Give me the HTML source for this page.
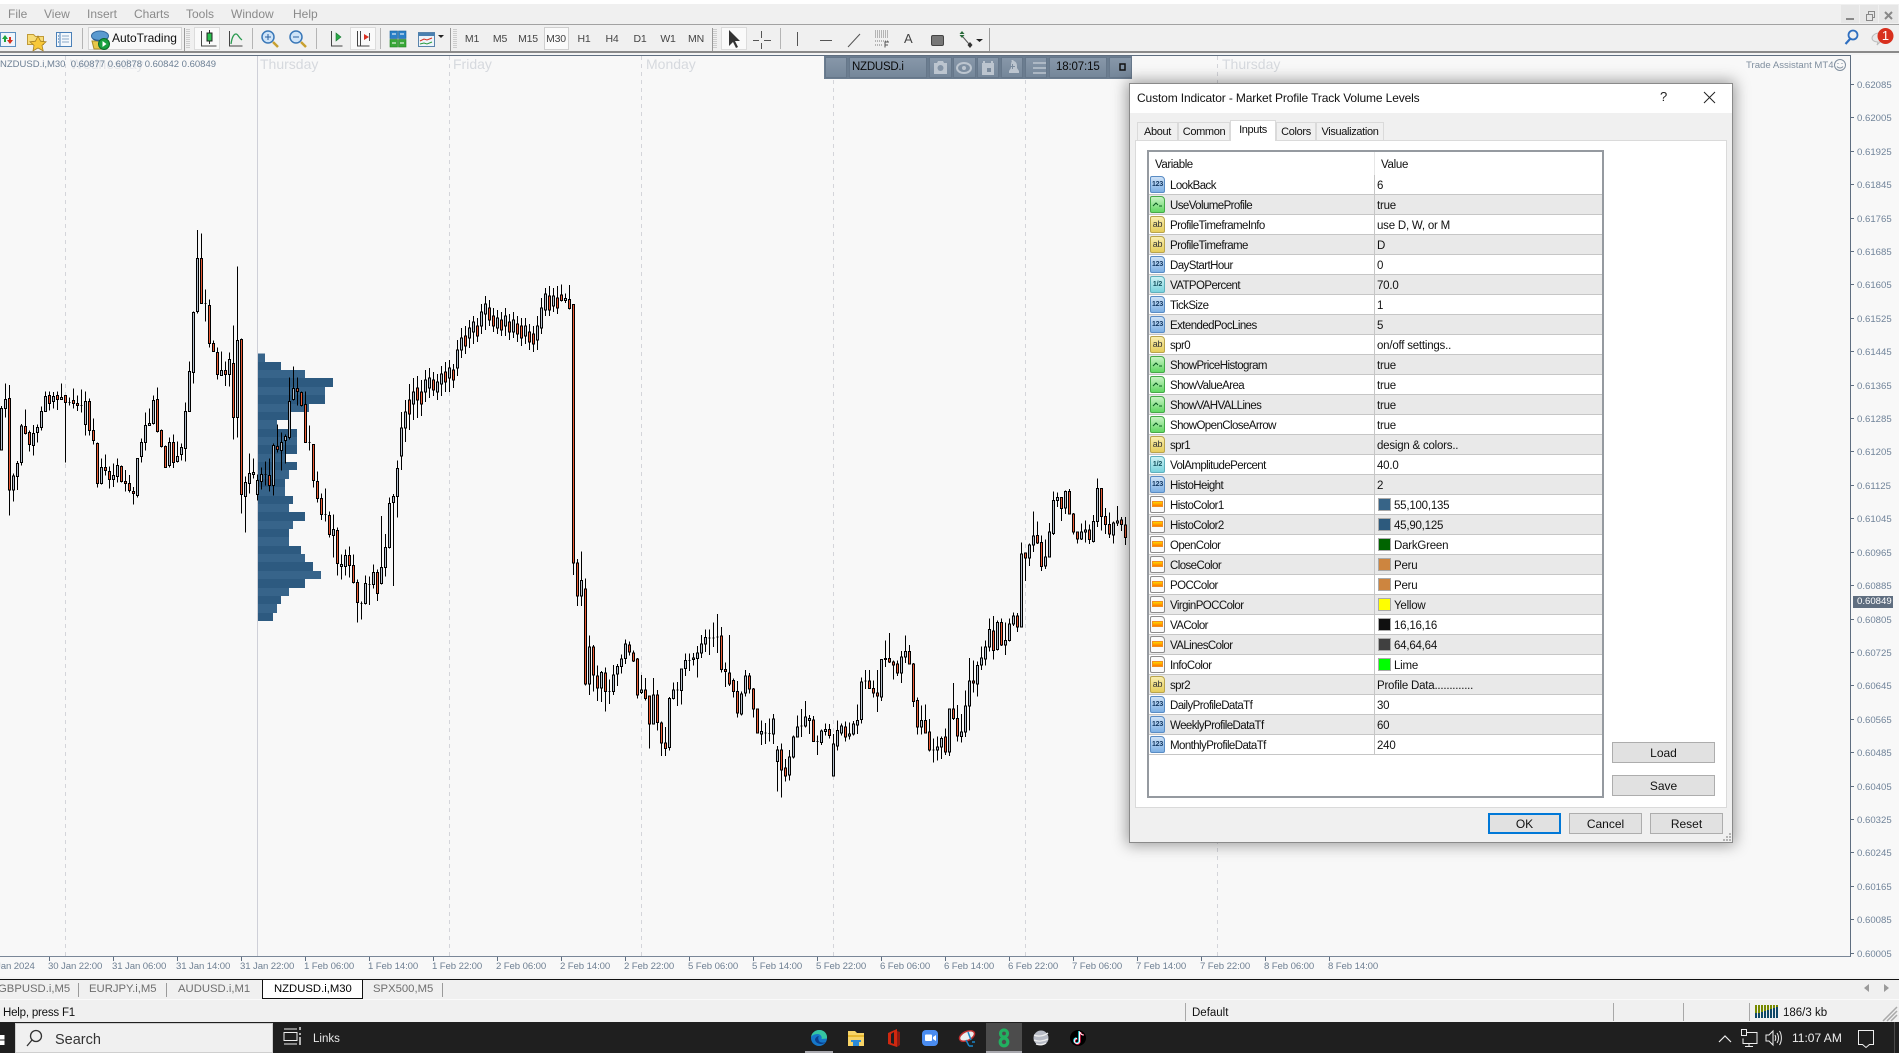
<!DOCTYPE html>
<html lang="en"><head><meta charset="utf-8"><title>MT4</title>
<style>
html,body{margin:0;padding:0;width:1899px;height:1053px;overflow:hidden;background:#f0f0f0;font-family:"Liberation Sans",sans-serif}
.t{position:absolute;white-space:nowrap;line-height:14px;height:14px}
.bx{position:absolute;box-sizing:border-box}
.m{font-size:12px;color:#8a8a8a;top:7px}
.tf{font-size:10.5px;color:#444;top:32px;width:28px;text-align:center;letter-spacing:-.2px}
.p{font-size:9.6px;color:#71849a;left:1857px;margin-top:2px}
.d{font-size:14px;color:#d6d9de;top:57px}
.x{font-size:9.6px;color:#6f8093;top:960px;letter-spacing:-.1px}
.tab{font-size:11.3px;color:#6e6e6e;top:982px}
.pb{position:absolute;top:57px;height:21px;background:linear-gradient(#8797a9,#75879a);box-sizing:border-box;border:1px solid #66778a}
#dlg{position:absolute;left:1129px;top:83px;width:604px;height:760px;box-sizing:border-box;background:#f0f0f0;border:1px solid #8a8a8a;box-shadow:0 0 14px 2px rgba(0,0,0,.38)}
.tb{position:absolute;top:38px;height:18px;box-sizing:border-box;border:1px solid #dadada;border-bottom:none;background:#f0f0f0;font-size:11px;letter-spacing:-.35px;line-height:19px;text-align:center;color:#111}
#list{position:absolute;left:1147px;top:150px;width:457px;height:648px;box-sizing:border-box;border:2px solid #959aa0;background:#fff}
.r{position:relative;height:20px;box-sizing:border-box;border-bottom:1px solid #c6c6c6;line-height:23px;font-size:11.5px;color:#111}
.r:nth-child(even){background:#e9e9e9}
.r b{position:absolute;left:21px;top:0;font-weight:normal;letter-spacing:-.58px;white-space:nowrap}
.r u{position:absolute;left:228px;top:0;text-decoration:none;white-space:nowrap;letter-spacing:-.22px}
.r s{position:absolute;left:229px;top:3px;width:13px;height:13px;box-sizing:border-box;border:1px solid #aaa}
.r s+u{left:245px}
.r::after{content:"";position:absolute;left:225px;top:0;bottom:-1px;width:1px;background:#c6c6c6}
.ic{position:absolute;left:1px;top:1px;width:15px;height:17px;box-sizing:border-box;border:1px solid;border-radius:2px 4px 2px 2px;font:bold 7px/15px "Liberation Sans",sans-serif;text-align:center;letter-spacing:-.2px}
.n{background:linear-gradient(#cfe2f7,#7eb0e4);border-color:#5a8cc4;color:#12365f}
.a{background:linear-gradient(#f9eeb0,#e6cd5c);border-color:#b9a44c;color:#333;font-size:9px;font-weight:normal}
.h{background:linear-gradient(#cdf2f4,#7ad2dd);border-color:#5fb0bd;color:#14505c}
.g{background:linear-gradient(#c8f2c4,#62d864);border-color:#46a948}
.c{background:#fafafa;border-color:#8b8b8b}
.c::before{content:"";position:absolute;left:1px;right:1px;top:4px;height:6px;background:linear-gradient(#ffd400,#ff7a00);border:1px solid #f09020;box-sizing:border-box}
.ic svg{position:absolute;left:0;top:0}
.btn{position:absolute;box-sizing:border-box;background:#e1e1e1;border:1px solid #adadad;font-size:12px;text-align:center;line-height:21px;color:#111}
</style></head><body>

<!-- top chrome -->
<div class="bx" style="left:0;top:0;width:1899px;height:4px;background:#fff"></div>
<div class="bx" style="left:0;top:24px;width:1899px;height:1px;background:#a2a2a2"></div>
<div class="bx" style="left:0;top:51px;width:1899px;height:2px;background:#8a8a8a"></div>
<div class="bx" style="left:0;top:53px;width:1899px;height:2px;background:#f4f4f4"></div>
<div class="t m" style="left:8px">File</div><div class="t m" style="left:44px">View</div><div class="t m" style="left:87px">Insert</div><div class="t m" style="left:134px">Charts</div><div class="t m" style="left:186px">Tools</div><div class="t m" style="left:231px">Window</div><div class="t m" style="left:293px">Help</div>
<div class="bx" style="left:1841px;top:5px;width:18px;height:18px;background:#e6e6e6"></div>
<div class="bx" style="left:1860px;top:5px;width:18px;height:18px;background:#e6e6e6"></div>
<div class="bx" style="left:1879px;top:5px;width:19px;height:18px;background:#e6e6e6"></div>
<div class="bx" style="left:88px;top:27px;width:94px;height:23px;background:#f8f8f8;border:1px solid #d4d4d4"></div>
<div class="bx" style="left:194px;top:27px;width:26px;height:23px;background:#fafafa;border:1px solid #dcdcdc"></div>
<div class="bx" style="left:350px;top:27px;width:26px;height:23px;background:#fafafa;border:1px solid #dcdcdc"></div>
<div class="bx" style="left:544px;top:27px;width:25px;height:23px;background:#fafafa;border:1px solid #cfcfcf"></div>
<div class="bx" style="left:721px;top:27px;width:26px;height:23px;background:#fafafa;border:1px solid #dcdcdc"></div>
<div class="t" style="left:112px;top:31px;font-size:12px;color:#111">AutoTrading</div>
<div class="t tf" style="left:458px">M1</div><div class="t tf" style="left:486px">M5</div><div class="t tf" style="left:514px">M15</div><div class="t tf" style="left:542px">M30</div><div class="t tf" style="left:570px">H1</div><div class="t tf" style="left:598px">H4</div><div class="t tf" style="left:626px">D1</div><div class="t tf" style="left:654px">W1</div><div class="t tf" style="left:682px">MN</div>
<div class="t" style="left:904px;top:32px;font-size:13px;color:#444">A</div>

<!-- toolbar icons -->
<svg style="position:absolute;left:0;top:0" width="1899" height="56" viewBox="0 0 1899 56" fill="none">
<rect x="0.5" y="32.5" width="15" height="14" fill="#eef5fc" stroke="#5a8fc0"/><path d="M5 35l-3 4h2v3h2v-3h2z" fill="#1aa33a"/><path d="M10 44l3-4h-2v-3H9v3H7z" fill="#d8301c"/>
<path d="M27.5 34.5h6l2 2h8v8h-16z" fill="#f8dd78" stroke="#c09a38"/><path d="M38 36l2.6 5.2 5.4.6-4 3.6 1.2 5.4-5.2-2.8-5 2.8 1-5.4-4-3.6 5.4-.6z" fill="#f8c838" stroke="#a88020" stroke-width=".8"/>
<rect x="56.5" y="32.5" width="15" height="14" fill="#f4f8fc" stroke="#4a80b8"/><path d="M60 33v13" stroke="#4a80b8"/><path d="M62 36h7M62 39h7M62 42h7" stroke="#8aa8c8"/><path d="M58 36h1M58 39h1M58 42h1" stroke="#2060a0"/>
<path d="M82.5 28v21M252.5 28v21M316.5 28v21M380.5 28v21M780.5 28v21" stroke="#b4b4b4"/>
<path d="M92 41h15l-2 8H94z" fill="#e8c848" stroke="#a88c28"/><ellipse cx="100" cy="36" rx="8.5" ry="5" fill="#5a9ad0" stroke="#34689c"/><path d="M93 39c4 2 10 2 15-1" stroke="#2a5a8c"/><circle cx="104" cy="44" r="5.5" fill="#18a040" stroke="#0c6a28"/><path d="M102.5 41v6l4-3z" fill="#fff"/>
<path d="M187 29v20M189 29v20M714 29v20M716 29v20M454 29v20M456 29v20" stroke="#aaa" stroke-dasharray="1 1"/>
<path d="M450.5 28v23M184.5 28v23M712.5 28v23M989.5 28v23" stroke="#9a9a9a"/>
<path d="M201.500 31v15h15" stroke="#444"/><path d="M209.500 30v14" stroke="#333"/><rect x="207" y="33" width="5" height="8" fill="#2cc050" stroke="#222"/>
<path d="M229.500 31v15h13" stroke="#444"/><path d="M231 44c1-7 3-10 5-10s3 4 6 6" stroke="#2a9a50" stroke-width="1.300"/>
<circle cx="268" cy="37" r="6" fill="#cfe4f8" stroke="#3a78b8" stroke-width="1.500"/><path d="M265 37h6M268 34v6" stroke="#2a60a0"/><path d="M273 42l5 5" stroke="#c8a030" stroke-width="2.500"/>
<circle cx="296" cy="37" r="6" fill="#cfe4f8" stroke="#3a78b8" stroke-width="1.500"/><path d="M293 37h6" stroke="#2a60a0"/><path d="M301 42l5 5" stroke="#c8a030" stroke-width="2.500"/>
<path d="M331.500 31v15h11" stroke="#444"/><path d="M336 33v8l5-4z" fill="#2aa848" stroke="#187830" stroke-width=".6"/>
<path d="M357.500 31v15h12M360.500 31v15" stroke="#444"/><path d="M369 37l-5-3v6z" fill="#d83020"/><path d="M369.500 33v8" stroke="#555"/>
<rect x="390" y="31" width="7.500" height="7.500" fill="#2a80c8" stroke="#186098" stroke-width=".6"/><rect x="398.500" y="31" width="7.500" height="7.500" fill="#2a80c8" stroke="#186098" stroke-width=".6"/><rect x="390" y="39.500" width="7.500" height="7.500" fill="#38a838" stroke="#208020" stroke-width=".6"/><rect x="398.500" y="39.500" width="7.500" height="7.500" fill="#38a838" stroke="#208020" stroke-width=".6"/><path d="M392 34h4M400 34h4M392 43h4M400 43h4" stroke="#fff"/>
<rect x="418.500" y="32.500" width="16" height="14" fill="#eef4fa" stroke="#5a84ac"/><path d="M418 33h17v3h-17z" fill="#4a80b0"/><path d="M420 41l4-2 3 1 5-2" stroke="#d83020"/><path d="M420 44l4-1 3 1 5-2" stroke="#2a9a40"/><path d="M438 35h6l-3 3z" fill="#222"/>
<path d="M729 30v16l4-4 3 6 2-1-3-6h5z" fill="#333"/><path d="M761.500 31v18M753 40.500h18" stroke="#555"/><path d="M759 40.500h5M761.500 38v5" stroke="#f0f0f0"/>
<path d="M797.500 32v14M820 40.500h12M848 47l12-13" stroke="#555"/>
<path d="M875 31h13M875 33h13M875 35h13M875 37h13M875 41h13M875 45h7" stroke="#777" stroke-dasharray="1 1"/><path d="M885 47.500V42h4M885 45h3" stroke="#555"/>
<rect x="931.500" y="35.500" width="12" height="10" rx="1.500" fill="#777" stroke="#444"/>
<path d="M962 31l2.500 3h-5zM962 38l2.500-3h-5z" fill="#2a6a3a"/><path d="M963 37l6 7" stroke="#555"/><path d="M970 42l2.500 3-2.500 3-2.500-3z" fill="#333"/><path d="M976 39h7l-3.500 3z" fill="#222"/>
<circle cx="1853" cy="35" r="4.500" stroke="#2f6fc0" stroke-width="1.800"/><path d="M1850 39l-4.500 5" stroke="#2f6fc0" stroke-width="2.200"/>
<path d="M1878 42c-4 0-6-2-6-4s3-5 7-5 7 2 7 5-3 4-6 4l-3 3z" fill="#e8e8e8" stroke="#bbb"/>
<circle cx="1885.500" cy="36" r="8" fill="#d8301e"/>
<path d="M1846 19h8" stroke="#888" stroke-width="2"/><rect x="1866.500" y="14.500" width="6" height="6" stroke="#888"/><path d="M1868.500 14v-2.500h6v6h-2" stroke="#888"/><path d="M1885 12l7 7M1892 12l-7 7" stroke="#888" stroke-width="2"/>
</svg>
<div class="t" style="left:1881px;top:29px;font-size:13px;color:#fff;width:9px;text-align:center">1</div>

<!-- chart area -->
<div class="bx" style="left:0;top:55px;width:1899px;height:923px;background:#f8f8f8"></div>
<div class="bx" style="left:0;top:55px;width:1851px;height:902px;border-top:1px solid #5f6e80;border-right:1px solid #5f6e80;border-bottom:1px solid #7a8798"></div>
<div class="t d" style="left:70px;color:#e2e4e8">Wednesday</div><div class="t d" style="left:260px">Thursday</div><div class="t d" style="left:453px">Friday</div><div class="t d" style="left:646px">Monday</div><div class="t d" style="left:1222px">Thursday</div>

<svg style="position:absolute;left:0;top:0" width="1899" height="1053" viewBox="0 0 1899 1053" fill="none" shape-rendering="crispEdges">
<path d="M65.500 56V956M449.500 56V956M641.500 56V956M833.500 56V956M1025.500 56V956M1217.500 56V956" stroke="#d4d5da" stroke-dasharray="4 4"/>
<path d="M257.500 56V956" stroke="#cfd0d8"/>
<g transform="translate(0 220) scale(1 .33333)">
<g fill="#37648a"><rect x="258" y="400" width="7" height="26"/><rect x="258" y="450" width="47" height="24"/><rect x="258" y="501" width="67" height="24"/><rect x="258" y="552" width="51" height="24"/><rect x="258" y="600" width="19" height="27"/><rect x="258" y="651" width="39" height="24"/><rect x="258" y="702" width="27" height="24"/><rect x="258" y="750" width="31" height="27"/><rect x="258" y="801" width="27" height="27"/><rect x="258" y="852" width="31" height="24"/><rect x="258" y="903" width="35" height="24"/><rect x="258" y="951" width="31" height="27"/><rect x="258" y="1002" width="47" height="24"/><rect x="258" y="1053" width="63" height="24"/><rect x="258" y="1104" width="31" height="24"/><rect x="258" y="1152" width="19" height="27"/></g>
<g fill="#2d5a80"><rect x="258" y="426" width="23" height="24"/><rect x="258" y="474" width="75" height="27"/><rect x="258" y="525" width="67" height="27"/><rect x="258" y="576" width="31" height="24"/><rect x="258" y="627" width="39" height="24"/><rect x="258" y="675" width="39" height="27"/><rect x="258" y="726" width="39" height="24"/><rect x="258" y="777" width="27" height="24"/><rect x="258" y="828" width="35" height="24"/><rect x="258" y="876" width="47" height="27"/><rect x="258" y="927" width="31" height="24"/><rect x="258" y="978" width="43" height="24"/><rect x="258" y="1026" width="55" height="27"/><rect x="258" y="1077" width="47" height="27"/><rect x="258" y="1128" width="23" height="24"/><rect x="258" y="1179" width="15" height="24"/></g>
<path vector-effect="non-scaling-stroke" stroke="#000" d="M1.500 558V690M5.500 490V592M9.500 495V887M13.500 760V845M17.500 723V810M21.500 612V737M25.500 568V643M29.500 632V695M33.500 615V707M37.500 613V668M41.500 560V632M45.500 514V575M49.500 514V572M53.500 516V566M57.500 514V570M61.500 490V540M65.500 526V728M69.500 533V556M73.500 505V565M77.500 526V573M81.500 508V577M85.500 514V647M89.500 535V647M93.500 595V674M97.500 668V803M101.500 715V793M105.500 703V767M109.500 739V806M113.500 731V801M117.500 715V787M121.500 736V787M125.500 750V814M129.500 765V817M133.500 801V854M137.500 715V832M141.500 655V728M145.500 577V691M149.500 565V618M153.500 526V613M157.500 502V637M161.500 628V682M165.500 676V744M169.500 652V742M173.500 643V744M177.500 664V727M181.500 670V721M185.500 547V724M189.500 424V574M193.500 274V490M197.500 30V280M201.500 40V250M205.500 208V304M209.500 238V382M213.500 362V396M217.500 382V478M221.500 394V466M225.500 424V498M229.500 397V500M233.500 316V658M237.500 139V653M241.500 355V881M245.500 769V937M249.500 700V820M253.500 715V775M257.500 763V841M261.500 742V808M265.500 724V796M269.500 715V814M273.500 670V826M277.500 613V697M281.500 637V752M285.500 643V730M289.500 472V658M293.500 439V541M297.500 472V556M301.500 514V560M305.500 514V667M309.500 616V691M313.500 673V802M317.500 754V848M321.500 820V900M325.500 805V905M329.500 874V952M333.500 883V1013M337.500 922V1067M341.500 1003V1079M345.500 988V1067M349.500 979V1073M353.500 1003V1090M357.500 1078V1208M361.500 1144V1198M365.500 1066V1153M369.500 1069V1155M373.500 1033V1105M377.500 1048V1143M381.500 888V1093M385.500 942V1070M389.500 832V985M393.500 822V1098M397.500 721V892M68.500 547h2M80.500 556h2M204.500 250h2M264.500 763h2M308.500 667h2M324.500 883h2M360.500 1150h2M368.500 1093h2"/>
<path vector-effect="non-scaling-stroke" stroke="#000" fill="#b4bfcc" d="M.5 565h2V690h-2zM4.500 538h2V565h-2zM12.500 768h2V810h-2zM16.500 730h2V770h-2zM20.500 618h2V727h-2zM32.500 640h2V676h-2zM36.500 622h2V637h-2zM40.500 574h2V622h-2zM44.500 529h2V574h-2zM52.500 529h2V544h-2zM60.500 532h2V538h-2zM84.500 544h2V613h-2zM100.500 742h2V790h-2zM112.500 766h2V778h-2zM116.500 736h2V769h-2zM136.500 715h2V826h-2zM140.500 667h2V709h-2zM144.500 616h2V667h-2zM148.500 610h2V616h-2zM152.500 541h2V610h-2zM168.500 667h2V736h-2zM176.500 709h2V724h-2zM180.500 682h2V703h-2zM184.500 574h2V685h-2zM188.500 454h2V574h-2zM192.500 277h2V457h-2zM196.500 115h2V274h-2zM220.500 451h2V466h-2zM228.500 418h2V463h-2zM236.500 361h2V592h-2zM244.500 787h2V829h-2zM248.500 760h2V790h-2zM252.500 757h2V763h-2zM256.500 781h2V823h-2zM260.500 763h2V784h-2zM272.500 676h2V796h-2zM280.500 667h2V691h-2zM284.500 649h2V661h-2zM288.500 544h2V652h-2zM292.500 505h2V538h-2zM332.500 928h2V946h-2zM340.500 1033h2V1039h-2zM344.500 1006h2V1039h-2zM364.500 1090h2V1150h-2zM372.500 1057h2V1093h-2zM380.500 1042h2V1090h-2zM384.500 982h2V1042h-2zM388.500 850h2V982h-2zM392.500 829h2V847h-2zM396.500 745h2V829h-2z"/>
<path vector-effect="non-scaling-stroke" stroke="#000" fill="#ea5a34" d="M8.500 535h2V810h-2zM24.500 619h2V641h-2zM28.500 637h2V673h-2zM48.500 526h2V550h-2zM56.500 526h2V538h-2zM64.500 526h2V547h-2zM72.500 541h2V550h-2zM76.500 550h2V556h-2zM88.500 544h2V631h-2zM92.500 631h2V661h-2zM96.500 670h2V790h-2zM104.500 742h2V752h-2zM108.500 754h2V778h-2zM120.500 739h2V784h-2zM124.500 784h2V790h-2zM128.500 790h2V811h-2zM132.500 814h2V820h-2zM156.500 538h2V634h-2zM160.500 631h2V679h-2zM164.500 679h2V742h-2zM172.500 667h2V727h-2zM200.500 115h2V250h-2zM208.500 256h2V370h-2zM212.500 370h2V394h-2zM216.500 397h2V463h-2zM224.500 451h2V463h-2zM232.500 430h2V592h-2zM240.500 358h2V823h-2zM268.500 766h2V796h-2zM276.500 679h2V688h-2zM296.500 505h2V514h-2zM300.500 517h2V556h-2zM304.500 553h2V667h-2zM312.500 673h2V781h-2zM316.500 784h2V835h-2zM320.500 835h2V883h-2zM328.500 886h2V943h-2zM336.500 931h2V1030h-2zM348.500 1006h2V1036h-2zM352.500 1036h2V1087h-2zM356.500 1087h2V1147h-2zM376.500 1057h2V1120h-2z"/>
</g>
<!-- mid section, real coordinates -->
<path stroke="#000" d="M401.500 412V470M405.500 400V442M409.500 384V430M413.500 378V420M417.500 376V418M421.500 380V416M425.500 370V402M429.500 368V398M433.500 372V396M437.500 374V400M441.500 366V396M445.500 362V392M449.500 360V392M453.500 364V388M457.500 340V376M461.500 328V358M465.500 326V354M469.500 320V348M473.500 316V344M477.500 318V342M481.500 304V334M485.500 296V330M489.500 300V326M493.500 308V332M497.500 310V334M501.500 312V336M505.500 308V336M509.500 314V340M513.500 312V338M517.500 316V342M521.500 318V346M525.500 318V344M529.500 324V350M533.500 326V352M537.500 316V350M541.500 298V334M545.500 288V316M549.500 286V316M553.500 288V312M557.500 286V314"/>
<path stroke="#000" fill="#b4bfcc" d="M400.500 428h2V456h-2zM404.500 412h2V428h-2zM412.500 392h2V404h-2zM424.500 380h2V392h-2zM428.500 378h2V388h-2zM436.500 382h2V392h-2zM440.500 374h2V384h-2zM448.500 368h2V378h-2zM456.500 350h2V368h-2zM460.500 338h2V350h-2zM468.500 328h2V338h-2zM472.500 322h2V332h-2zM480.500 312h2V326h-2zM484.500 304h2V314h-2zM496.500 318h2V328h-2zM504.500 316h2V326h-2zM512.500 320h2V332h-2zM524.500 326h2V336h-2zM536.500 326h2V340h-2zM540.500 308h2V328h-2zM544.500 294h2V310h-2zM552.500 296h2V306h-2z"/>
<path stroke="#000" fill="#ea5a34" d="M408.500 400h2V414h-2zM416.500 388h2V400h-2zM420.500 392h2V404h-2zM432.500 380h2V390h-2zM444.500 372h2V382h-2zM452.500 370h2V380h-2zM464.500 336h2V346h-2zM476.500 326h2V336h-2zM488.500 308h2V320h-2zM492.500 316h2V326h-2zM500.500 320h2V330h-2zM508.500 322h2V332h-2zM516.500 324h2V334h-2zM520.500 326h2V338h-2zM528.500 332h2V342h-2zM532.500 334h2V344h-2zM548.500 296h2V310h-2zM556.500 298h2V308h-2z"/>
<g transform="translate(0 270) scale(1 .34483)">
<path vector-effect="non-scaling-stroke" stroke="#000" d="M561.500 42V92M565.500 68V95M569.500 44V115M573.500 100V885M577.500 838V975M581.500 817V975M585.500 895V1205M589.500 1060V1233M593.500 1087V1222M597.500 1147V1250M601.500 1163V1253M605.500 1153V1280M609.500 1188V1258M613.500 1145V1233M617.500 1142V1207M621.500 1115V1170M625.500 1072V1143M629.500 1078V1118M633.500 1104V1137M637.500 1125V1243M641.500 1175V1230M645.500 1183V1248M649.500 1235V1388M653.500 1183V1317M657.500 1218V1335M661.500 1310V1410M665.500 1325V1410M669.500 1238V1393M673.500 1196V1245M677.500 1195V1265M681.500 1155V1260M685.500 1112V1178M689.500 1112V1163M693.500 1110V1147M697.500 1090V1182M701.500 1058V1125M705.500 1042V1108M709.500 1042V1117M713.500 1022V1093M717.500 998V1110M721.500 1035V1167M725.500 1138V1210M729.500 1058V1207M733.500 1185V1240M737.500 1192V1298M741.500 1222V1292M745.500 1160V1237M749.500 1168V1228M753.500 1212V1298M757.500 1273V1342M761.500 1307V1378M765.500 1313V1375M769.500 1300V1368M773.500 1287V1375M777.500 1380V1513M781.500 1373V1530M785.500 1418V1483M789.500 1392V1480M793.500 1350V1417M797.500 1292V1355M801.500 1273V1355M805.500 1250V1327M809.500 1290V1345M813.500 1293V1367M817.500 1350V1407M821.500 1332V1378M825.500 1315V1350M829.500 1316V1358M833.500 1345V1468M837.500 1307V1393M841.500 1315V1350M845.500 1310V1367M849.500 1312V1362M853.500 1308V1350M857.500 1260V1345M861.500 1182V1315M865.500 1160V1215M869.500 1160V1215M873.500 1190V1240M877.500 1160V1282M881.500 1128V1250M885.500 1075V1152M889.500 1053V1140M893.500 1132V1187M897.500 1132V1178M901.500 1105V1198M905.500 1060V1140M909.500 1087V1143M913.500 1140V1268M917.500 1240V1347M921.500 1263V1347M925.500 1260V1343M929.500 1302V1397M933.500 1358V1428M937.500 1353V1422M941.500 1353V1418M945.500 1330V1407M949.500 1273V1410M953.500 1197V1305M957.500 1262V1367M961.500 1287V1370M965.500 1220V1355M969.500 1125V1335M973.500 1133V1225M977.500 1135V1237M981.500 1092V1160M985.500 1075V1147M989.500 1010V1107M993.500 1003V1130M997.500 1017V1103M1001.500 1010V1090M1005.500 1022V1117M1009.500 1010V1077M1013.500 993V1032M1017.500 995V1050M1021.500 790V1035M1025.500 820V902M1029.500 793V858M1033.500 700V818M1037.500 730V795M1041.500 770V873M1045.500 782V867M1049.500 733V832M1053.500 643V768M1057.500 645V688M1061.500 658V728M1065.500 640V708M1069.500 635V707M1073.500 705V767M1077.500 758V793M1081.500 735V783M1085.500 727V790M1089.500 738V795M1093.500 710V790M1097.500 605V745M1101.500 634V755M1105.500 690V765M1109.500 703V777M1113.500 730V793M1117.500 685V742M1121.500 717V757M1125.500 717V798M608.500 1222h2M676.500 1218h2M688.500 1132h2M708.500 1067h2M712.500 1067h2M716.500 1065h2M764.500 1342h2M768.500 1344h2M800.500 1323h2M816.500 1367h2M864.500 1192h2M932.500 1392h2"/>
<path vector-effect="non-scaling-stroke" stroke="#000" fill="#b4bfcc" d="M564.500 82h2V88h-2zM580.500 900h2V945h-2zM588.500 1093h2V1200h-2zM600.500 1167h2V1212h-2zM612.500 1175h2V1222h-2zM616.500 1150h2V1172h-2zM620.500 1128h2V1150h-2zM624.500 1084h2V1127h-2zM640.500 1218h2V1225h-2zM652.500 1232h2V1317h-2zM668.500 1242h2V1385h-2zM672.500 1218h2V1242h-2zM680.500 1157h2V1220h-2zM684.500 1132h2V1155h-2zM692.500 1125h2V1130h-2zM696.500 1110h2V1126h-2zM700.500 1084h2V1110h-2zM704.500 1066h2V1085h-2zM740.500 1230h2V1288h-2zM744.500 1178h2V1227h-2zM760.500 1338h2V1345h-2zM772.500 1302h2V1345h-2zM776.500 1392h2V1425h-2zM788.500 1412h2V1465h-2zM792.500 1354h2V1413h-2zM796.500 1325h2V1354h-2zM804.500 1296h2V1323h-2zM808.500 1300h2V1306h-2zM820.500 1337h2V1370h-2zM824.500 1332h2V1338h-2zM832.500 1375h2V1468h-2zM836.500 1335h2V1380h-2zM840.500 1322h2V1342h-2zM848.500 1345h2V1352h-2zM852.500 1317h2V1345h-2zM856.500 1306h2V1320h-2zM860.500 1195h2V1304h-2zM880.500 1130h2V1238h-2zM884.500 1127h2V1130h-2zM900.500 1122h2V1168h-2zM904.500 1107h2V1122h-2zM920.500 1307h2V1325h-2zM936.500 1384h2V1392h-2zM940.500 1358h2V1384h-2zM948.500 1273h2V1398h-2zM960.500 1340h2V1353h-2zM964.500 1265h2V1340h-2zM968.500 1192h2V1265h-2zM976.500 1147h2V1200h-2zM980.500 1125h2V1145h-2zM984.500 1093h2V1128h-2zM988.500 1043h2V1093h-2zM996.500 1022h2V1100h-2zM1004.500 1075h2V1087h-2zM1008.500 1027h2V1075h-2zM1012.500 1003h2V1027h-2zM1020.500 823h2V1035h-2zM1028.500 797h2V835h-2zM1032.500 772h2V797h-2zM1044.500 832h2V858h-2zM1048.500 760h2V832h-2zM1052.500 668h2V764h-2zM1056.500 660h2V668h-2zM1064.500 643h2V690h-2zM1080.500 760h2V780h-2zM1084.500 754h2V760h-2zM1092.500 730h2V787h-2zM1096.500 634h2V730h-2zM1112.500 733h2V768h-2zM1116.500 728h2V734h-2z"/>
<path vector-effect="non-scaling-stroke" stroke="#000" fill="#ea5a34" d="M560.500 72h2V88h-2zM568.500 85h2V112h-2zM572.500 100h2V850h-2zM576.500 850h2V945h-2zM584.500 925h2V1200h-2zM592.500 1093h2V1175h-2zM596.500 1177h2V1212h-2zM604.500 1168h2V1223h-2zM628.500 1087h2V1108h-2zM632.500 1110h2V1134h-2zM636.500 1128h2V1232h-2zM644.500 1218h2V1242h-2zM648.500 1235h2V1317h-2zM656.500 1232h2V1312h-2zM660.500 1313h2V1372h-2zM664.500 1372h2V1387h-2zM720.500 1062h2V1158h-2zM724.500 1158h2V1165h-2zM728.500 1168h2V1200h-2zM732.500 1190h2V1223h-2zM736.500 1223h2V1285h-2zM748.500 1178h2V1215h-2zM752.500 1215h2V1273h-2zM756.500 1273h2V1342h-2zM780.500 1392h2V1450h-2zM784.500 1444h2V1467h-2zM812.500 1305h2V1367h-2zM828.500 1332h2V1350h-2zM844.500 1326h2V1355h-2zM868.500 1192h2V1213h-2zM872.500 1213h2V1227h-2zM876.500 1227h2V1236h-2zM888.500 1126h2V1137h-2zM892.500 1137h2V1145h-2zM896.500 1142h2V1168h-2zM908.500 1107h2V1142h-2zM912.500 1142h2V1252h-2zM916.500 1248h2V1325h-2zM924.500 1307h2V1342h-2zM928.500 1340h2V1392h-2zM944.500 1355h2V1398h-2zM952.500 1273h2V1300h-2zM956.500 1300h2V1352h-2zM972.500 1192h2V1198h-2zM992.500 1047h2V1103h-2zM1000.500 1022h2V1087h-2zM1016.500 1003h2V1035h-2zM1024.500 820h2V835h-2zM1036.500 770h2V792h-2zM1040.500 790h2V860h-2zM1060.500 660h2V692h-2zM1068.500 643h2V707h-2zM1072.500 708h2V760h-2zM1076.500 760h2V780h-2zM1088.500 754h2V782h-2zM1100.500 634h2V715h-2zM1104.500 715h2V738h-2zM1108.500 738h2V765h-2zM1120.500 725h2V738h-2zM1124.500 740h2V776h-2z"/>
</g>
<path stroke="#5f6e80" d="M1851 84.500h3M1851 117.500h3M1851 151.500h3M1851 184.500h3M1851 218.500h3M1851 251.500h3M1851 284.500h3M1851 318.500h3M1851 351.500h3M1851 385.500h3M1851 418.500h3M1851 451.500h3M1851 485.500h3M1851 518.500h3M1851 552.500h3M1851 585.500h3M1851 619.500h3M1851 652.500h3M1851 685.500h3M1851 719.500h3M1851 752.500h3M1851 786.500h3M1851 819.500h3M1851 852.500h3M1851 886.500h3M1851 919.500h3M1851 953.500h3"/>
<path stroke="#5f6e80" d="M49.500 957v4M113.500 957v4M177.500 957v4M241.500 957v4M305.500 957v4M369.500 957v4M433.500 957v4M497.500 957v4M561.500 957v4M625.500 957v4M689.500 957v4M753.500 957v4M817.500 957v4M881.500 957v4M945.500 957v4M1009.500 957v4M1073.500 957v4M1137.500 957v4M1201.500 957v4M1265.500 957v4M1329.500 957v4"/>
</svg>

<div class="t" style="left:0;top:58px;font-size:9.5px;color:#6c7f94">NZDUSD.i,M30&nbsp; 0.60877 0.60878 0.60842 0.60849</div>
<div class="t" style="left:1746px;top:59px;font-size:9.6px;color:#7f8e9e">Trade Assistant MT4</div>
<svg style="position:absolute;left:1833px;top:58px" width="14" height="14" fill="none" stroke="#7f8e9e"><circle cx="7" cy="7" r="5.500"/><path d="M4 8.500c1.500 2 4.500 2 6 0"/><path d="M5 5v1M9 5v1"/></svg>

<!-- price axis -->
<div class="t p" style="top:77px">0.62085</div><div class="t p" style="top:110px">0.62005</div><div class="t p" style="top:144px">0.61925</div><div class="t p" style="top:177px">0.61845</div><div class="t p" style="top:211px">0.61765</div><div class="t p" style="top:244px">0.61685</div><div class="t p" style="top:277px">0.61605</div><div class="t p" style="top:311px">0.61525</div><div class="t p" style="top:344px">0.61445</div><div class="t p" style="top:378px">0.61365</div><div class="t p" style="top:411px">0.61285</div><div class="t p" style="top:444px">0.61205</div><div class="t p" style="top:478px">0.61125</div><div class="t p" style="top:511px">0.61045</div><div class="t p" style="top:545px">0.60965</div><div class="t p" style="top:578px">0.60885</div>
<div class="bx" style="left:1853px;top:596px;width:40px;height:12px;background:#5f6e80"></div>
<div class="t p" style="top:593px;color:#fff">0.60849</div>
<div class="t p" style="top:612px">0.60805</div><div class="t p" style="top:645px">0.60725</div><div class="t p" style="top:678px">0.60645</div><div class="t p" style="top:712px">0.60565</div><div class="t p" style="top:745px">0.60485</div><div class="t p" style="top:779px">0.60405</div><div class="t p" style="top:812px">0.60325</div><div class="t p" style="top:845px">0.60245</div><div class="t p" style="top:879px">0.60165</div><div class="t p" style="top:912px">0.60085</div><div class="t p" style="top:946px">0.60005</div>

<!-- time axis -->
<div class="t x" style="left:-17px">30 Jan 2024</div><div class="t x" style="left:48px">30 Jan 22:00</div><div class="t x" style="left:112px">31 Jan 06:00</div><div class="t x" style="left:176px">31 Jan 14:00</div><div class="t x" style="left:240px">31 Jan 22:00</div><div class="t x" style="left:304px">1 Feb 06:00</div><div class="t x" style="left:368px">1 Feb 14:00</div><div class="t x" style="left:432px">1 Feb 22:00</div><div class="t x" style="left:496px">2 Feb 06:00</div><div class="t x" style="left:560px">2 Feb 14:00</div><div class="t x" style="left:624px">2 Feb 22:00</div><div class="t x" style="left:688px">5 Feb 06:00</div><div class="t x" style="left:752px">5 Feb 14:00</div><div class="t x" style="left:816px">5 Feb 22:00</div><div class="t x" style="left:880px">6 Feb 06:00</div><div class="t x" style="left:944px">6 Feb 14:00</div><div class="t x" style="left:1008px">6 Feb 22:00</div><div class="t x" style="left:1072px">7 Feb 06:00</div><div class="t x" style="left:1136px">7 Feb 14:00</div><div class="t x" style="left:1200px">7 Feb 22:00</div><div class="t x" style="left:1264px">8 Feb 06:00</div><div class="t x" style="left:1328px">8 Feb 14:00</div>

<!-- one click panel -->
<div class="bx" style="left:824px;top:56px;width:308px;height:23px;background:#6b7d90"></div>
<div class="pb" style="left:825px;width:22px"></div>
<div class="pb" style="left:849px;width:78px"></div>
<div class="pb" style="left:929px;width:23px"></div><div class="pb" style="left:953px;width:23px"></div><div class="pb" style="left:977px;width:22px"></div><div class="pb" style="left:1001px;width:22px"></div><div class="pb" style="left:1025px;width:22px"></div><div class="pb" style="left:1049px;width:58px"></div><div class="pb" style="left:1109px;width:23px"></div>
<div class="t" style="left:852px;top:60px;font-size:11.500px;color:#0a0a0a;letter-spacing:-.25px">NZDUSD.i</div>
<div class="t" style="left:1056px;top:60px;font-size:11.500px;color:#0a0a0a;letter-spacing:-.15px">18:07:15</div>
<svg style="position:absolute;left:824px;top:56px" width="308" height="23" fill="none">
<path d="M110 7h3l1-2h5l1 2h3v11h-13z" fill="#bcc5cf"/><circle cx="116.500" cy="12" r="3" fill="#8494a6"/>
<ellipse cx="140" cy="12" rx="7" ry="5" stroke="#bcc5cf" stroke-width="2"/><circle cx="140" cy="12" r="2" fill="#bcc5cf"/>
<path d="M158 7h12v12h-12z" fill="#bcc5cf"/><path d="M160 5v3M168 5v3" stroke="#bcc5cf" stroke-width="2"/><rect x="163" y="12" width="4" height="4" fill="#7b8b9d"/>
<path d="M187 5l1-1h1l1 1c3 1 3 4 3 7l2 3v2h-10v-2l2-3c0-3 0-6 1-7z" fill="#bcc5cf"/><path d="M188.500 8v5M186 10.500h5" stroke="#7b8b9d"/>
<path d="M209 7h13M209 12h13M209 17h13" stroke="#bcc5cf" stroke-width="1.600"/>
<rect x="296" y="8" width="5" height="6" stroke="#111" stroke-width="1.500"/>
</svg>

<!-- dialog -->
<div id="dlg">
<div class="bx" style="left:0;top:0;width:602px;height:29px;background:#fff"></div>
<div class="t" style="left:7px;top:7px;font-size:12px;letter-spacing:-.13px;color:#111">Custom Indicator - Market Profile Track Volume Levels</div>
<div class="t" style="left:530px;top:6px;width:10px;font-size:13px;color:#222">?</div>
<svg style="position:absolute;left:573px;top:7px" width="13" height="13" fill="none" stroke="#222"><path d="M1 1l11 11M12 1L1 12"/></svg>
<div class="bx" style="left:5px;top:56px;width:592px;height:668px;background:#fff;border:1px solid #dadada"></div>
<div class="tb" style="left:7px;width:41px">About</div>
<div class="tb" style="left:48px;width:52px">Common</div>
<div class="tb" style="left:100px;width:46px;top:36px;height:21px;background:#fff">Inputs</div>
<div class="tb" style="left:146px;width:40px">Colors</div>
<div class="tb" style="left:186px;width:68px">Visualization</div>
</div>

<div id="list">
<div style="position:absolute;left:0;top:0;width:453px;height:23px;background:#fff;font-size:11.5px;line-height:27px;color:#111">
<span style="position:absolute;left:6px;letter-spacing:-.45px">Variable</span><span style="position:absolute;left:232px;letter-spacing:-.3px">Value</span>
<span style="position:absolute;left:225px;top:0;width:1px;height:23px;background:#e6e6e6"></span></div>
<div style="position:absolute;left:0;top:23px;width:453px">
<div class="r"><i class="ic n">123</i><b>LookBack</b><u>6</u></div>
<div class="r"><i class="ic g"><svg width="13" height="15" fill="none" stroke="#0a5a20"><path d="M2 9l3-3 2 2M8 9h3"/></svg></i><b>UseVolumeProfile</b><u>true</u></div>
<div class="r"><i class="ic a">ab</i><b>ProfileTimeframeInfo</b><u>use D, W, or M</u></div>
<div class="r"><i class="ic a">ab</i><b>ProfileTimeframe</b><u>D</u></div>
<div class="r"><i class="ic n">123</i><b>DayStartHour</b><u>0</u></div>
<div class="r"><i class="ic h">1/2</i><b>VATPOPercent</b><u>70.0</u></div>
<div class="r"><i class="ic n">123</i><b>TickSize</b><u>1</u></div>
<div class="r"><i class="ic n">123</i><b>ExtendedPocLines</b><u>5</u></div>
<div class="r"><i class="ic a">ab</i><b>spr0</b><u>on/off settings..</u></div>
<div class="r"><i class="ic g"><svg width="13" height="15" fill="none" stroke="#0a5a20"><path d="M2 9l3-3 2 2M8 9h3"/></svg></i><b>ShowPriceHistogram</b><u>true</u></div>
<div class="r"><i class="ic g"><svg width="13" height="15" fill="none" stroke="#0a5a20"><path d="M2 9l3-3 2 2M8 9h3"/></svg></i><b>ShowValueArea</b><u>true</u></div>
<div class="r"><i class="ic g"><svg width="13" height="15" fill="none" stroke="#0a5a20"><path d="M2 9l3-3 2 2M8 9h3"/></svg></i><b>ShowVAHVALLines</b><u>true</u></div>
<div class="r"><i class="ic g"><svg width="13" height="15" fill="none" stroke="#0a5a20"><path d="M2 9l3-3 2 2M8 9h3"/></svg></i><b>ShowOpenCloseArrow</b><u>true</u></div>
<div class="r"><i class="ic a">ab</i><b>spr1</b><u>design &amp; colors..</u></div>
<div class="r"><i class="ic h">1/2</i><b>VolAmplitudePercent</b><u>40.0</u></div>
<div class="r"><i class="ic n">123</i><b>HistoHeight</b><u>2</u></div>
<div class="r"><i class="ic c"></i><b>HistoColor1</b><s style="background:#376487"></s><u>55,100,135</u></div>
<div class="r"><i class="ic c"></i><b>HistoColor2</b><s style="background:#2d5a7d"></s><u>45,90,125</u></div>
<div class="r"><i class="ic c"></i><b>OpenColor</b><s style="background:#006400"></s><u>DarkGreen</u></div>
<div class="r"><i class="ic c"></i><b>CloseColor</b><s style="background:#cd853f"></s><u>Peru</u></div>
<div class="r"><i class="ic c"></i><b>POCColor</b><s style="background:#cd853f"></s><u>Peru</u></div>
<div class="r"><i class="ic c"></i><b>VirginPOCColor</b><s style="background:#ff0"></s><u>Yellow</u></div>
<div class="r"><i class="ic c"></i><b>VAColor</b><s style="background:#101010"></s><u>16,16,16</u></div>
<div class="r"><i class="ic c"></i><b>VALinesColor</b><s style="background:#404040"></s><u>64,64,64</u></div>
<div class="r"><i class="ic c"></i><b>InfoColor</b><s style="background:#0f0"></s><u>Lime</u></div>
<div class="r"><i class="ic a">ab</i><b>spr2</b><u>Profile Data.............</u></div>
<div class="r"><i class="ic n">123</i><b>DailyProfileDataTf</b><u>30</u></div>
<div class="r"><i class="ic n">123</i><b>WeeklyProfileDataTf</b><u>60</u></div>
<div class="r"><i class="ic n">123</i><b>MonthlyProfileDataTf</b><u>240</u></div>
</div>
</div>
<div class="btn" style="left:1612px;top:742px;width:103px;height:21px">Load</div>
<div class="btn" style="left:1612px;top:775px;width:103px;height:21px">Save</div>
<div class="btn" style="left:1488px;top:813px;width:73px;height:21px;border:2px solid #0078d7;line-height:19px">OK</div>
<div class="btn" style="left:1569px;top:813px;width:73px;height:21px">Cancel</div>
<div class="btn" style="left:1650px;top:813px;width:73px;height:21px">Reset</div>
<svg style="position:absolute;left:1722px;top:832px" width="10" height="10" fill="#b4b4b4"><rect x="7" y="1" width="2" height="2"/><rect x="4" y="4" width="2" height="2"/><rect x="7" y="4" width="2" height="2"/><rect x="1" y="7" width="2" height="2"/><rect x="4" y="7" width="2" height="2"/><rect x="7" y="7" width="2" height="2"/></svg>

<!-- tab bar -->
<div class="bx" style="left:0;top:977px;width:1899px;height:2px;background:#f4f4f4"></div>
<div class="bx" style="left:0;top:979px;width:1899px;height:21px;background:#f0f0f0;border-top:1px solid #111;border-bottom:1px solid #fafafa"></div>
<div class="bx" style="left:262px;top:979px;width:101px;height:20px;background:#fff;border:1px solid #111;border-top:1px solid #111"></div>
<div class="t tab" style="left:-2px">GBPUSD.i,M5</div><div class="t tab" style="left:89px">EURJPY.i,M5</div><div class="t tab" style="left:178px">AUDUSD.i,M1</div><div class="t tab" style="left:274px;color:#000">NZDUSD.i,M30</div><div class="t tab" style="left:373px">SPX500,M5</div>
<svg style="position:absolute;left:0;top:979px" width="1899" height="21" fill="none"><path d="M78.500 4v14M166.500 4v14M442.500 4v14" stroke="#9a9a9a"/><path d="M1869 5v8l-5-4zM1884 5v8l5-4z" fill="#9a9a9a"/></svg>

<!-- status bar -->
<div class="t" style="left:3px;top:1006px;font-size:11.500px;letter-spacing:-.2px;color:#111">Help, press F1</div>
<div class="t" style="left:1192px;top:1006px;font-size:11.500px;color:#111">Default</div>
<div class="t" style="left:1783px;top:1006px;font-size:11.500px;color:#111">186/3 kb</div>
<svg style="position:absolute;left:0;top:1000px" width="1899" height="22" fill="none">
<path d="M1185.500 3v18M1613.500 3v18M1683.500 3v18M1749.500 3v18" stroke="#a8a8a8"/>
<g stroke-width="2"><path d="M1756 5v8M1759 5v8M1762 5v7M1765 5v6M1768 5v5M1771 5v4M1774 5v3M1777 5v2" stroke="#768a00"/><path d="M1756 13v5M1759 13v5M1762 12v6M1765 11v7M1768 10v8M1771 9v9M1774 8v10M1777 7v11" stroke="#0e4766"/></g>
<path d="M1883 21l14-14M1887 21l10-10M1891 21l6-6" stroke="#aaa" stroke-width="1.500"/>
</svg>

<!-- taskbar -->
<div class="bx" style="left:0;top:1022px;width:1899px;height:31px;background:#1f1f1f"></div>
<div class="bx" style="left:15px;top:1023px;width:258px;height:30px;background:#f0f0f0;border:1px solid #cfcfcf"></div>
<div class="t" style="left:55px;top:1032px;height:16px;line-height:16px;font-size:14.500px;color:#333">Search</div>
<div class="t" style="left:313px;top:1032px;font-size:11.500px;color:#e8e8e8">Links</div>
<div class="t" style="left:1792px;top:1031px;font-size:12px;color:#eee">11:07 AM</div>
<div class="bx" style="left:986px;top:1023px;width:36px;height:30px;background:#4c4c4c"></div>
<div class="bx" style="left:986px;top:1051px;width:36px;height:2px;background:#a8a8ae"></div>
<div class="bx" style="left:805px;top:1051px;width:28px;height:2px;background:#a8a8ae"></div>
<svg style="position:absolute;left:0;top:1022px" width="1899" height="31" fill="none">
<path d="M0 13h4.500v4.500H0zM0 18.500h4.500V23H0z" fill="#fff"/>
<circle cx="36" cy="14" r="5.500" stroke="#333" stroke-width="1.300"/><path d="M32 18l-5 6" stroke="#333" stroke-width="1.300"/>
<path d="M284 7h13M284 10.500h13v8h-13zM284 22h13" stroke="#eee"/><path d="M300 11v2M300 15v8M300 5v3" stroke="#eee" stroke-width="1.400"/>
<circle cx="819" cy="16" r="8" fill="#1577c9"/><path d="M811 15c1-5 5-7 8.500-7 5 0 8 4 7.500 8.500l-5.500.5c1-2-1-5-4-5-3.500 0-6 2-6.500 3z" fill="#35c6a2"/><path d="M815 18c1 3 4 4 6 4 2 0 4-1 5-2-2 1-6 1-7-1s-1-4 0-5c-2 0-4 2-4 4z" fill="#0b3f8c"/>
<path d="M848 9h7l2 2h7v13h-16z" fill="#f8d568"/><path d="M848 13h16v2h-16z" fill="#e8b830"/><path d="M853 24v-6h6v6z" fill="#2b8ad8"/><path d="M851 18h10v2h-10z" fill="#2b8ad8"/>
<path d="M888 11l9-4v18l-9-3z" fill="#d02810"/><path d="M891 12v9l3 1V10z" fill="#1f1f1f"/><path d="M897 9l3 1v13l-3 2z" fill="#8b1a10"/>
<rect x="922" y="8" width="16" height="16" rx="4" fill="#4a8cf0"/><rect x="925" y="12.500" width="7" height="6.500" rx="1" fill="#fff"/><path d="M933 15l3-2v6l-3-2z" fill="#fff"/>
<ellipse cx="967" cy="14" rx="8" ry="4.500" fill="#eee" stroke="#c03030" stroke-width="1.500" transform="rotate(-25 967 14)"/><path d="M968 10l3 8M966 18l3 6M969 24h4M972 20h3" stroke="#1a86c8" stroke-width="1.500"/>
<circle cx="1004" cy="11.500" r="3.500" stroke="#22b060" stroke-width="3.200"/><circle cx="1004" cy="20" r="3.800" stroke="#22b060" stroke-width="3.200"/>
<circle cx="1041" cy="16" r="7.500" fill="#b8bcc6"/><path d="M1034 13c4 2 10 1 14-2M1034 18c4 2 10 1 14-1M1036 22c3 1 7 1 10-1" stroke="#eee" stroke-width="1.300"/>
<circle cx="1078" cy="16" r="8" fill="#000"/><path d="M1079 9v9.500a2.500 2.500 0 1 1-2.500-2.500" stroke="#28d8e0" stroke-width="1.600"/><path d="M1080 10v9.500a2.500 2.500 0 1 1-2.500-2.500M1080.500 10c.5 2 2 3 3.500 3" stroke="#f02050" stroke-width="1.400"/><path d="M1079.500 9.500v9.500a2.500 2.500 0 1 1-2.500-2.500M1080 10c.5 2 2 3 3.500 3" stroke="#fff" stroke-width="1"/>
<path d="M1719 20l6-6 6 6" stroke="#eee" stroke-width="1.200"/>
<path d="M1747 10.500h10v11h-14v-5M1749 21.500v3M1745 24.500h8" stroke="#eee"/><rect x="1741.500" y="7.500" width="5" height="6" fill="#1f1f1f" stroke="#eee"/>
<path d="M1766 13h3l4-4v14l-4-4h-3z" stroke="#eee"/><path d="M1775 13c1 2 1 4 0 6M1777 11c2 3 2 7 0 10M1779.500 9c2.500 4 2.500 10 0 14" stroke="#eee"/>
<path d="M1858.500 8.500h15v14h-4l-3.500 3-3.500-3h-4z" stroke="#eee"/>
<path d="M1894.500 0v31" stroke="#4a4a4a"/>
</svg>
</body></html>
